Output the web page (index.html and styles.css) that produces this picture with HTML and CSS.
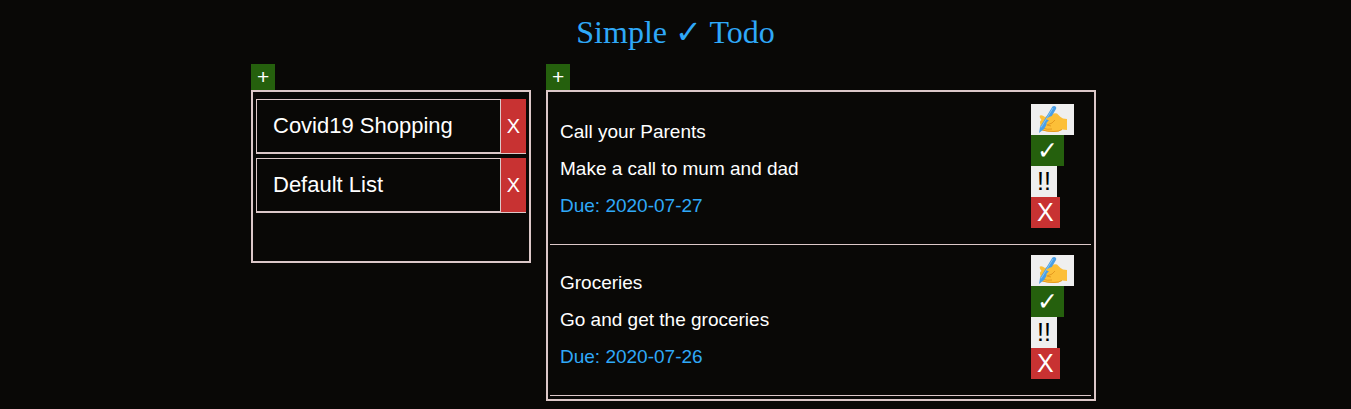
FILE: index.html
```html
<!DOCTYPE html>
<html lang="en">
<head>
<meta charset="utf-8">
<meta name="viewport" content="width=device-width, initial-scale=1">
<title>Simple ✓ Todo</title>
<link rel="stylesheet" href="styles.css">
</head>
<body>
<svg width="0" height="0" class="sprite" aria-hidden="true">
  <symbol id="writing-hand" viewBox="0 0 31 29">
    <path fill="#fcbf38" d="M3 10.5 Q5 9.5 8 12 L12 10 Q17 7.5 20 8.500 Q23 12 26 13.500 L30 14 V25 L25 24.500 Q22 27 17 27 Q10 27 5 25 Q4 24 6 23 Q2 21 3.500 19.500 Q2 16 4.500 15 Q2 12 3 10.500 Z"/>
    <path fill="none" stroke="#e59a20" d="M6 23 Q10 25 15 24 M25 24.500 Q22 26.500 17 26.500 Q10 26.500 5 25 M10 20 L14 21"/>
    <path fill="#4a9fe6" d="M15.500 1.500 Q17.500 .5 19 2 Q19.500 3 19 4 L7 24 L2 28 L3 22 Z"/>
    <path fill="none" stroke="#82c5f7" d="M16 3 L4 22.500"/>
    <path fill="#fcbf38" d="M9 14 Q12 11 17 10.500 L20 14 L15 18 L10 20 Q8 18 12 15.500 Z"/>
    <path fill="none" stroke="#e59a20" d="M10 20 L15 18 L18 15"/>
  </symbol>
</svg>
<header><h1 class="title">Simple ✓ Todo</h1></header>
<main class="board">
  <section class="column">
    <button class="add" type="button" aria-label="Add list">+</button>
    <ul class="panel lists">
      <li class="list-row">
        <button class="list-name" type="button">Covid19 Shopping</button>
        <button class="list-delete" type="button" aria-label="Delete Covid19 Shopping">X</button>
      </li>
      <li class="list-row">
        <button class="list-name" type="button">Default List</button>
        <button class="list-delete" type="button" aria-label="Delete Default List">X</button>
      </li>
    </ul>
  </section>
  <section class="column">
    <button class="add" type="button" aria-label="Add task">+</button>
    <ul class="panel tasks">
      <li class="task">
        <div class="task-text">
          <p>Call your Parents</p>
          <p>Make a call to mum and dad</p>
          <p class="due">Due: 2020-07-27</p>
        </div>
        <div class="actions">
          <button class="action" type="button" aria-label="Edit"><svg class="icon" width="31" height="29"><use href="#writing-hand"/></svg></button>
          <button class="action done" type="button" aria-label="Done">✓</button>
          <button class="action" type="button" aria-label="Important">!!</button>
          <button class="action delete" type="button" aria-label="Delete">X</button>
        </div>
      </li>
      <li class="task">
        <div class="task-text">
          <p>Groceries</p>
          <p>Go and get the groceries</p>
          <p class="due">Due: 2020-07-26</p>
        </div>
        <div class="actions">
          <button class="action" type="button" aria-label="Edit"><svg class="icon" width="31" height="29"><use href="#writing-hand"/></svg></button>
          <button class="action done" type="button" aria-label="Done">✓</button>
          <button class="action" type="button" aria-label="Important">!!</button>
          <button class="action delete" type="button" aria-label="Delete">X</button>
        </div>
      </li>
    </ul>
  </section>
</main>
</body>
</html>
```
FILE: styles.css
```css
* {
  box-sizing: border-box;
}

body {
  margin: 0;
  background: #090806;
  color: #fff;
  font-family: "Liberation Sans", Arial, sans-serif;
}

button {
  border: 0;
  font-family: inherit;
  color: #fff;
  cursor: pointer;
}

.sprite,
.icon {
  display: block;
}

.title {
  margin: 0;
  padding: 14px 0;
  color: #2fa8f8;
  font: 400 32px/36px "Liberation Serif", "Times New Roman", serif;
  text-align: center;
}

.board {
  display: grid;
  grid-template-columns: 280px minmax(0, 550px);
  gap: 15px;
  align-items: start;
  max-width: 849px;
  margin: 0 auto;
}

.column {
  display: flex;
  flex-direction: column;
  align-items: flex-start;
}

.add {
  padding: 1px 6px;
  background: #25600d;
  font-size: 21px;
  line-height: 24px;
}

.panel {
  width: 100%;
  margin: 0;
  list-style: none;
  border: 2px solid #dcc8c8;
}

.lists {
  display: flex;
  flex-direction: column;
  gap: 4px;
  padding: 7px 3px 48px;
}

.list-row {
  display: flex;
  border-bottom: 1px solid #dcc8c8;
}

.list-name {
  flex: 1;
  padding: 14px 16px;
  background: transparent;
  border: 1px solid #dcc8c8;
  font-size: 22px;
  line-height: 24px;
  text-align: left;
}

.list-delete {
  padding: 1px 6px;
  background: #c83232;
  font-size: 20px;
}

.tasks {
  padding: 2px 3px 3px 2px;
}

.task {
  display: flex;
  justify-content: space-between;
  padding: 10px 17px 16px 10px;
  border-bottom: 1px solid #dcc8c8;
}

.task-text {
  display: flex;
  flex-direction: column;
  gap: 15px;
  padding-top: 17px;
}

.task-text p {
  margin: 0;
  font-size: 19px;
  line-height: 22px;
}

.task-text .due {
  color: #2fa8f8;
}

.actions {
  display: flex;
  flex-direction: column;
  align-items: flex-start;
}

.action {
  height: 31px;
  padding: 1px 6px;
  background: #efefef;
  color: #000;
  font-size: 25px;
  line-height: 29px;
}

.done {
  background: #25600d;
  color: #fff;
}

.delete {
  background: #c83232;
  color: #fff;
}
```
